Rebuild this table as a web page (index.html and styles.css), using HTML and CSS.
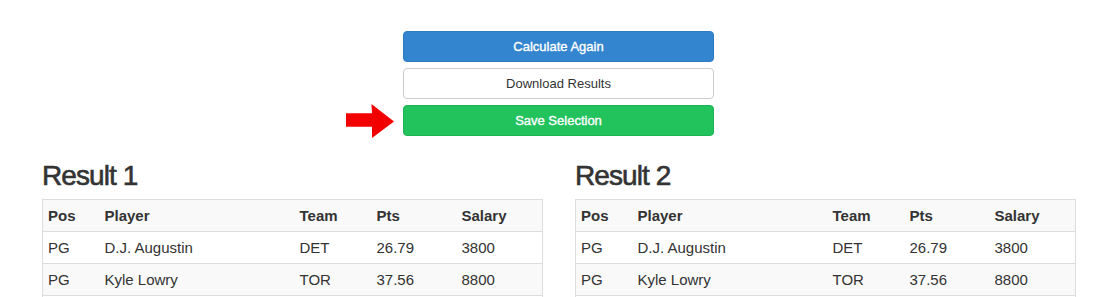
FILE: index.html
```html
<!DOCTYPE html>
<html>
<head>
<meta charset="utf-8">
<link rel="stylesheet" href="styles.css">
</head>
<body>
<div class="page">
  <div class="actions">
    <button class="btn btn-primary">Calculate Again</button>
    <button class="btn btn-default">Download Results</button>
    <div class="save-row">
      <svg class="arrow" width="50" height="36" viewBox="0 0 50 36"><polygon points="0,10.3 26,10.3 25.5,1 48,18.5 26,35 26,23.7 0,23.7" fill="#f20000"/></svg>
      <button class="btn btn-success">Save Selection</button>
    </div>
  </div>
  <div class="results">
    <section class="result">
      <h2>Result 1</h2>
      <table class="tbl">
        <colgroup><col class="c-pos"><col class="c-player"><col class="c-team"><col class="c-pts"><col class="c-sal"></colgroup>
        <thead><tr><th>Pos</th><th>Player</th><th>Team</th><th>Pts</th><th>Salary</th></tr></thead>
        <tbody>
          <tr><td>PG</td><td>D.J. Augustin</td><td>DET</td><td>26.79</td><td>3800</td></tr>
          <tr class="alt"><td>PG</td><td>Kyle Lowry</td><td>TOR</td><td>37.56</td><td>8800</td></tr>
          <tr><td>&nbsp;</td><td>&nbsp;</td><td>&nbsp;</td><td>&nbsp;</td><td>&nbsp;</td></tr>
        </tbody>
      </table>
    </section>
    <section class="result">
      <h2>Result 2</h2>
      <table class="tbl">
        <colgroup><col class="c-pos"><col class="c-player"><col class="c-team"><col class="c-pts"><col class="c-sal"></colgroup>
        <thead><tr><th>Pos</th><th>Player</th><th>Team</th><th>Pts</th><th>Salary</th></tr></thead>
        <tbody>
          <tr><td>PG</td><td>D.J. Augustin</td><td>DET</td><td>26.79</td><td>3800</td></tr>
          <tr class="alt"><td>PG</td><td>Kyle Lowry</td><td>TOR</td><td>37.56</td><td>8800</td></tr>
          <tr><td>&nbsp;</td><td>&nbsp;</td><td>&nbsp;</td><td>&nbsp;</td><td>&nbsp;</td></tr>
        </tbody>
      </table>
    </section>
  </div>
</div>
</body>
</html>
```
FILE: styles.css
```css
html, body {
  margin: 0;
  padding: 0;
  background: #fff;
}
body {
  font-family: "Liberation Sans", Arial, sans-serif;
  color: #333;
  overflow: hidden;
}
.page {
  width: 1033px;
  padding-left: 42px;
}
.actions {
  width: 311px;
  margin: 31px auto 0;
  display: flex;
  flex-direction: column;
  gap: 6px;
}
.btn-default {
  margin-top: 1px;
}
.save-row {
  position: relative;
  display: flex;
}
.arrow {
  position: absolute;
  left: -57px;
  top: -2px;
}
.btn {
  width: 311px;
  height: 31px;
  padding: 0;
  margin: 0;
  border: 1px solid transparent;
  border-radius: 4px;
  font-family: "Liberation Sans", Arial, sans-serif;
  font-size: 13px;
  line-height: 29px;
  text-align: center;
  cursor: pointer;
}
.btn-primary {
  background: #3385cf;
  border-color: #2f7bc0;
  color: #fff;
  -webkit-text-stroke: 0.35px #fff;
}
.btn-default {
  background: #fff;
  border-color: #ccc;
  color: #333;
}
.btn-success {
  background: #22c25d;
  border-color: #1fb254;
  color: #fff;
  -webkit-text-stroke: 0.35px #fff;
}
.results {
  display: grid;
  grid-template-columns: 500px 500px;
  column-gap: 33px;
}
.result h2 {
  margin: 23px 0 7px;
  font-size: 28px;
  line-height: 33px;
  font-weight: normal;
  letter-spacing: -0.9px;
  color: #333;
  -webkit-text-stroke: 0.6px #333;
}
.tbl {
  width: 500px;
  border-collapse: collapse;
  table-layout: fixed;
  border: 1px solid #ddd;
  font-size: 15px;
  line-height: 21px;
}
.c-pos { width: 57px; }
.c-player { width: 195px; }
.c-team { width: 77px; }
.c-pts { width: 85px; }
.c-sal { width: 86px; }
.tbl th, .tbl td {
  padding: 5px;
  text-align: left;
  border-top: 1px solid #ddd;
  white-space: nowrap;
}
.tbl th {
  font-weight: bold;
}
.tbl thead tr, .tbl tr.alt {
  background: #f9f9f9;
}
```
